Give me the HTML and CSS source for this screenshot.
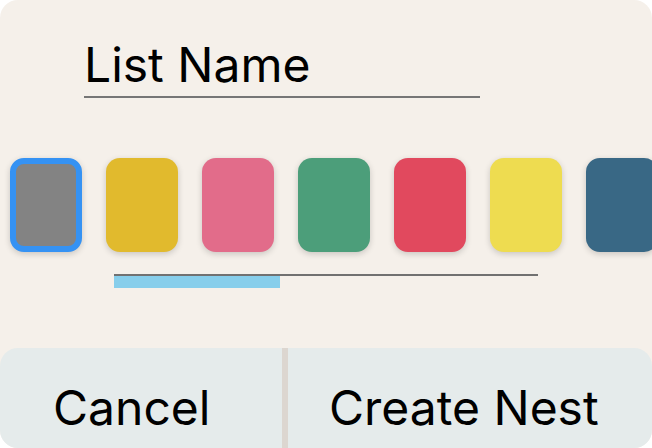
FILE: index.html
```html
<!DOCTYPE html>
<html>
<head>
<meta charset="utf-8">
<link rel="stylesheet" href="styles.css">
</head>
<body>
<div class="card">
  <div class="name-field">
    <div class="name-input">List Name</div>
  </div>
  <div class="swatches">
    <div class="swatch selected gray"></div>
    <div class="swatch mustard"></div>
    <div class="swatch pink"></div>
    <div class="swatch green"></div>
    <div class="swatch red"></div>
    <div class="swatch yellow"></div>
    <div class="swatch blue"></div>
  </div>
  <div class="scroll-track">
    <div class="scroll-thumb"></div>
  </div>
  <div class="actions">
    <button class="btn btn-cancel">Cancel</button>
    <div class="divider"></div>
    <button class="btn btn-create">Create Nest</button>
  </div>
</div>
</body>
</html>
```
FILE: styles.css
```css
html, body {
  margin: 0;
  padding: 0;
  background: #ffffff;
}
body {
  font-family: Inter, Roboto, "Liberation Sans", sans-serif;
  color: #000;
}
.card {
  width: 652px;
  height: 448px;
  background: #f5f0ea;
  border-radius: 18px;
  overflow: hidden;
  display: flex;
  flex-direction: column;
}
.name-field {
  padding: 37px 0 0 84px;
}
.name-input {
  width: 396px;
  font-size: 48px;
  line-height: 56px;
  padding-bottom: 3px;
  border-bottom: 2px solid #767676;
}
.swatches {
  display: flex;
  gap: 24px;
  margin-top: 52px;
  padding: 8px 0 8px 10px;
  overflow: hidden;
}
.swatch {
  flex: 0 0 72px;
  height: 94px;
  box-sizing: border-box;
  border-radius: 14px;
  box-shadow: 0 2px 6px rgba(0, 0, 0, 0.18);
}
.swatch.selected {
  border: 6px solid #3592f3;
}
.gray { background: #838383; }
.mustard { background: #e1ba2d; }
.pink { background: #e26c8a; }
.green { background: #4c9e7a; }
.red { background: #e1495e; }
.yellow { background: #eedc50; }
.blue { background: #396885; }
.scroll-track {
  margin: 14px 0 0 114px;
  width: 424px;
  border-top: 2px solid #717171;
}
.scroll-thumb {
  width: 166px;
  height: 12px;
  background: #87ceeb;
}
.actions {
  margin-top: auto;
  height: 100px;
  display: flex;
}
.btn {
  border: none;
  margin: 0;
  background: #e5ebeb;
  font-family: Inter, Roboto, "Liberation Sans", sans-serif;
  font-size: 48px;
  line-height: 56px;
  color: #000;
  text-align: left;
  padding: 19px 0 0 0;
  display: block;
  align-self: stretch;
  box-sizing: border-box;
}
.btn-cancel {
  width: 282px;
  padding-left: 53px;
  border-top-left-radius: 18px;
}
.divider {
  width: 6px;
  background: #dcd6d0;
}
.btn-create {
  flex: 1;
  padding-left: 41px;
  border-top-right-radius: 18px;
}
```
